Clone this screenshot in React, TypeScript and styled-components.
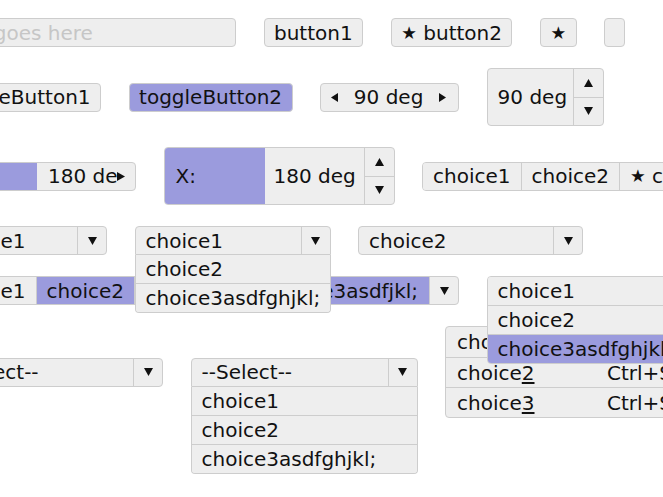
import React from 'react';
import styled, { createGlobalStyle, css } from 'styled-components';

const FILL = '#eeeeee';
const LINE = '#cdcdcd';
const ACCENT = '#9b9bdd';
const INK = '#111111';

const GlobalStyle = createGlobalStyle`
  html {
    overflow: hidden;
  }
  html, body {
    margin: 0;
    padding: 0;
    background: #ffffff;
  }
  body {
    min-height: 497px;
    font-family: "DejaVu Sans", "Liberation Sans", sans-serif;
    font-size: 20px;
    color: ${INK};
  }
`;

const control = css`
  box-sizing: border-box;
  height: 29px;
  border: 1px solid ${LINE};
  border-radius: 4px;
  background: ${FILL};
  flex-shrink: 0;
`;

const Page = styled.div`
  display: flex;
  flex-direction: column;
  gap: 21px;
  min-height: 497px;
  box-sizing: border-box;
  padding-top: 18px;
  margin-left: -63px;
`;

const Row = styled.div`
  display: flex;
  align-items: center;
  gap: 27.5px;
  white-space: nowrap;
  & > * {
    flex-shrink: 0;
  }
`;

const TextField = styled.input`
  ${control};
  width: 299px;
  padding: 0 0 0 9px;
  font: inherit;
  color: ${INK};
  outline: none;
  &::placeholder {
    color: #c6c6c6;
  }
`;

const Button = styled.button<{ $on?: boolean }>`
  ${control};
  padding: 0 9.5px;
  font: inherit;
  color: ${INK};
  background: ${(p) => (p.$on ? ACCENT : FILL)};
  display: inline-flex;
  align-items: center;
`;

const Star = styled.span`
  font-size: 17.5px;
`;

const Spinner = styled.div`
  ${control};
  width: 139px;
  display: flex;
  align-items: center;
  justify-content: space-between;
  padding: 0 12px 0 10px;
`;

const SpinBox = styled.div<{ $w: number }>`
  ${control};
  height: 58px;
  width: ${(p) => p.$w}px;
  display: flex;
  overflow: hidden;
`;

const SpinLabel = styled.div`
  width: 100px;
  background: ${ACCENT};
  display: flex;
  align-items: center;
  padding-left: 11px;
  box-sizing: border-box;
`;

const SpinValue = styled.div<{ $pad?: number }>`
  flex: 1;
  display: flex;
  align-items: center;
  padding-left: ${(p) => p.$pad ?? 10}px;
`;

const SpinArrows = styled.div`
  width: 29px;
  border-left: 1px solid ${LINE};
  display: flex;
  flex-direction: column;
  & > div {
    flex: 1;
    display: flex;
    align-items: center;
    justify-content: center;
  }
  & > div + div {
    border-top: 1px solid ${LINE};
  }
`;

const Slider = styled.div`
  ${control};
  width: 199px;
  display: flex;
  align-items: center;
  overflow: hidden;
`;

const SliderFill = styled.div`
  width: 99px;
  align-self: stretch;
  background: ${ACCENT};
`;

const SliderText = styled.div`
  flex: 1;
  min-width: 0;
  overflow: hidden;
  padding-left: 11px;
`;

const SliderArrow = styled.div`
  display: flex;
  margin-right: 10px;
`;

const Segmented = styled.div`
  ${control};
  display: flex;
  overflow: hidden;
`;

const Segment = styled.div<{ $on?: boolean }>`
  display: flex;
  align-items: center;
  padding: 0 10px;
  background: ${(p) => (p.$on ? ACCENT : FILL)};
  & + & {
    border-left: 1px solid ${LINE};
  }
`;

const Select = styled.div<{ $w: number; $open?: boolean }>`
  ${control};
  width: ${(p) => p.$w}px;
  display: flex;
  position: relative;
  ${(p) =>
    p.$open &&
    css`
      border-radius: 4px 4px 0 0;
      z-index: 2;
    `}
`;

const SelectText = styled.div<{ $sel?: boolean; $end?: boolean }>`
  flex: 1;
  min-width: 0;
  overflow: hidden;
  display: flex;
  align-items: center;
  justify-content: ${(p) => (p.$end ? 'flex-end' : 'flex-start')};
  padding: ${(p) => (p.$end ? '0 11px 0 0' : '0 0 0 10px')};
  background: ${(p) => (p.$sel ? ACCENT : 'transparent')};
  border-radius: 3px 0 0 3px;
`;

const SelectArrow = styled.div`
  width: 29px;
  box-sizing: border-box;
  border-left: 1px solid ${LINE};
  display: flex;
  align-items: center;
  justify-content: center;
`;

const DropList = styled.div`
  position: absolute;
  top: calc(100% + 1px);
  left: -1px;
  right: -1px;
  border: 1px solid ${LINE};
  border-top: none;
  border-radius: 0 0 4px 4px;
  background: ${FILL};
  overflow: hidden;
`;

const Option = styled.div<{ $on?: boolean }>`
  box-sizing: border-box;
  height: 29px;
  padding-left: 10px;
  display: flex;
  align-items: center;
  border-bottom: 1px solid ${LINE};
  background: ${(p) => (p.$on ? ACCENT : FILL)};
  &:last-child {
    border-bottom: none;
    height: 28px;
  }
`;

const PopupAnchor = styled.div`
  position: relative;
  width: 196px;
  height: 29px;
`;

const PopupList = styled.div`
  position: absolute;
  top: 0;
  left: 0;
  width: 196px;
  border: 1px solid ${LINE};
  border-radius: 4px;
  background: ${FILL};
  overflow: hidden;
  z-index: 3;
`;

const Menu = styled.div`
  box-sizing: border-box;
  width: 280px;
  border: 1px solid ${LINE};
  border-radius: 4px;
  background: ${FILL};
`;

const MenuItem = styled.div`
  box-sizing: border-box;
  height: 30px;
  display: grid;
  grid-template-columns: 150px auto;
  align-items: center;
  padding-left: 11px;
  & + & {
    border-top: 1px solid ${LINE};
  }
`;

const Mnemonic = styled.span`
  text-decoration: underline;
  text-underline-offset: 2px;
`;

type Dir = 'up' | 'down' | 'left' | 'right';

function Tri({ dir, w = 9, h = 8 }: { dir: Dir; w?: number; h?: number }) {
  const points = {
    up: `0,${h} ${w / 2},0 ${w},${h}`,
    down: `0,0 ${w},0 ${w / 2},${h}`,
    left: `${w},0 ${w},${h} 0,${h / 2}`,
    right: `0,0 ${w},${h / 2} 0,${h}`,
  }[dir];
  return (
    <svg width={w} height={h} viewBox={`0 0 ${w} ${h}`}>
      <polygon points={points} fill={INK} />
    </svg>
  );
}

const longChoices = ['choice1', 'choice2', 'choice3asdfghjkl;'];

export default function App() {
  return (
    <>
      <GlobalStyle />
      <Page>
        <Row>
          <TextField placeholder="Text goes here" />
          <Button>button1</Button>
          <Button>
            <Star>★</Star>&nbsp;button2
          </Button>
          <Button>
            <Star>★</Star>
          </Button>
          <Button />
        </Row>

        <Row>
          <Button>toggleButton1</Button>
          <Button $on>toggleButton2</Button>
          <Spinner>
            <Tri dir="left" w={7} h={9} />
            <span>90 deg</span>
            <Tri dir="right" w={7} h={9} />
          </Spinner>
          <SpinBox $w={117}>
            <SpinValue>90 deg</SpinValue>
            <SpinArrows>
              <div>
                <Tri dir="up" />
              </div>
              <div>
                <Tri dir="down" />
              </div>
            </SpinArrows>
          </SpinBox>
        </Row>

        <Row>
          <Slider>
            <SliderFill />
            <SliderText>180 deg</SliderText>
            <SliderArrow>
              <Tri dir="right" w={8} h={9} />
            </SliderArrow>
          </Slider>
          <SpinBox $w={231}>
            <SpinLabel>X:</SpinLabel>
            <SpinValue $pad={9}>180 deg</SpinValue>
            <SpinArrows>
              <div>
                <Tri dir="up" />
              </div>
              <div>
                <Tri dir="down" />
              </div>
            </SpinArrows>
          </SpinBox>
          <Segmented>
            <Segment>choice1</Segment>
            <Segment>choice2</Segment>
            <Segment>
              <Star>★</Star>&nbsp;choice3
            </Segment>
          </Segmented>
        </Row>

        <Row>
          <Select $w={170}>
            <SelectText>choice1</SelectText>
            <SelectArrow>
              <Tri dir="down" />
            </SelectArrow>
          </Select>
          <Select $w={196} $open>
            <SelectText>choice1</SelectText>
            <SelectArrow>
              <Tri dir="down" />
            </SelectArrow>
            <DropList>
              <Option>choice2</Option>
              <Option>choice3asdfghjkl;</Option>
            </DropList>
          </Select>
          <Select $w={225}>
            <SelectText>choice2</SelectText>
            <SelectArrow>
              <Tri dir="down" />
            </SelectArrow>
          </Select>
        </Row>

        <Row>
          <Segmented>
            <Segment>choice1</Segment>
            <Segment $on>choice2</Segment>
            <Segment>
              <Star>★</Star>&nbsp;choice3
            </Segment>
          </Segmented>
          <Select $w={176}>
            <SelectText $sel $end>
              <span>choice3asdfjkl;</span>
            </SelectText>
            <SelectArrow>
              <Tri dir="down" />
            </SelectArrow>
          </Select>
          <PopupAnchor>
            <PopupList>
              {longChoices.map((c, i) => (
                <Option key={c} $on={i === 2}>
                  {c}
                </Option>
              ))}
            </PopupList>
          </PopupAnchor>
        </Row>

        <Row>
          <Select $w={226}>
            <SelectText>--Select--</SelectText>
            <SelectArrow>
              <Tri dir="down" />
            </SelectArrow>
          </Select>
          <Select $w={227} $open>
            <SelectText>--Select--</SelectText>
            <SelectArrow>
              <Tri dir="down" />
            </SelectArrow>
            <DropList>
              {longChoices.map((c) => (
                <Option key={c}>{c}</Option>
              ))}
            </DropList>
          </Select>
          <Menu>
            <MenuItem>
              <span>
                choice<Mnemonic>1</Mnemonic>
              </span>
              <span>Ctrl+Shift+1</span>
            </MenuItem>
            <MenuItem>
              <span>
                choice<Mnemonic>2</Mnemonic>
              </span>
              <span>Ctrl+Shift+2</span>
            </MenuItem>
            <MenuItem>
              <span>
                choice<Mnemonic>3</Mnemonic>
              </span>
              <span>Ctrl+Shift+3</span>
            </MenuItem>
          </Menu>
        </Row>
      </Page>
    </>
  );
}
